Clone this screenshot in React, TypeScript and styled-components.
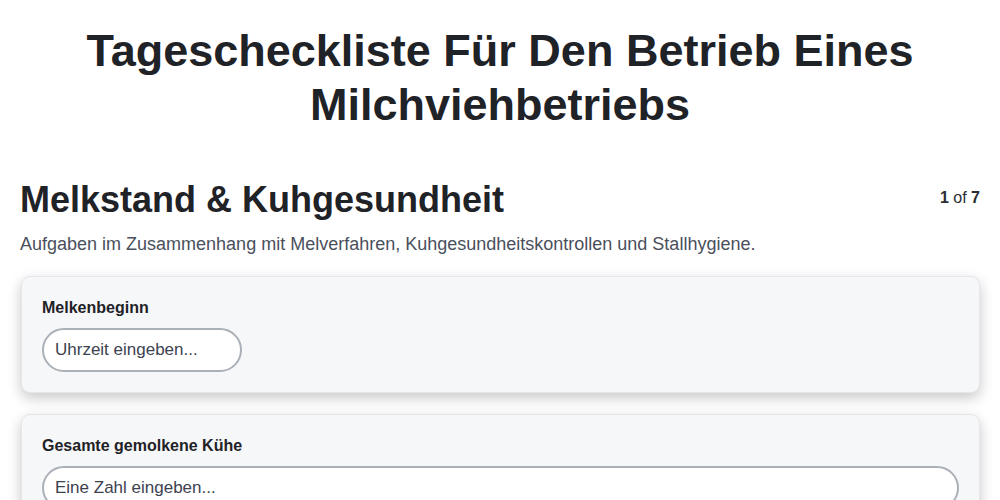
import React from "react";
import styled, { createGlobalStyle } from "styled-components";

const Global = createGlobalStyle`
  html, body { margin: 0; padding: 0; background: #ffffff; }
  body { font-family: "Liberation Sans", Arial, sans-serif; color: #202124; }
  * { box-sizing: border-box; }
`;

const Page = styled.div`
  padding: 24px 20px 20px;
`;

const Title = styled.h1`
  margin: 0 0 46px;
  text-align: center;
  font-size: 45px;
  line-height: 54px;
  font-weight: 700;
  color: #1f2226;
`;

const SectionHead = styled.div`
  display: flex;
  justify-content: space-between;
  align-items: flex-start;
`;

const SectionTitle = styled.h2`
  margin: 0;
  font-size: 36px;
  line-height: 44px;
  font-weight: 700;
  color: #1f2226;
`;

const Counter = styled.div`
  font-size: 16px;
  line-height: 20px;
  color: #2a2d33;
  padding-top: 10px;
  b { font-weight: 700; }
`;

const Subtitle = styled.p`
  margin: 11px 0 21px;
  font-size: 18px;
  line-height: 22px;
  color: #4a4f5c;
`;

const Cards = styled.div`
  display: flex;
  flex-direction: column;
  gap: 21px;
  padding-left: 1px;
`;

const Card = styled.div`
  background: #f6f7f9;
  border: 1px solid #e4e6ea;
  border-radius: 9px;
  padding: 21px 20px 20px;
  box-shadow: 0 5px 14px rgba(0, 0, 0, 0.22);
`;

const Label = styled.label`
  display: block;
  font-size: 16px;
  line-height: 19px;
  font-weight: 700;
  color: #1f2226;
  margin-bottom: 11px;
`;

const Input = styled.input<{ $w?: string }>`
  display: block;
  width: ${(p) => p.$w || "100%"};
  height: 44px;
  border: 2px solid #a9b0b7;
  border-radius: 22px;
  background: #ffffff;
  padding: 0 11px;
  font-family: "Liberation Sans", Arial, sans-serif;
  font-size: 17px;
  color: #2a2d33;
  outline: none;
  &::placeholder { color: #3d4250; opacity: 1; }
`;

export default function App() {
  return (
    <>
      <Global />
      <Page>
        <Title>Tagescheckliste Für Den Betrieb Eines Milchviehbetriebs</Title>
        <SectionHead>
          <SectionTitle>Melkstand &amp; Kuhgesundheit</SectionTitle>
          <Counter>
            <b>1</b> of <b>7</b>
          </Counter>
        </SectionHead>
        <Subtitle>
          Aufgaben im Zusammenhang mit Melverfahren, Kuhgesundheitskontrollen und Stallhygiene.
        </Subtitle>
        <Cards>
          <Card>
            <Label>Melkenbeginn</Label>
            <Input $w="200px" placeholder="Uhrzeit eingeben..." />
          </Card>
          <Card>
            <Label>Gesamte gemolkene Kühe</Label>
            <Input placeholder="Eine Zahl eingeben..." />
          </Card>
        </Cards>
      </Page>
    </>
  );
}
